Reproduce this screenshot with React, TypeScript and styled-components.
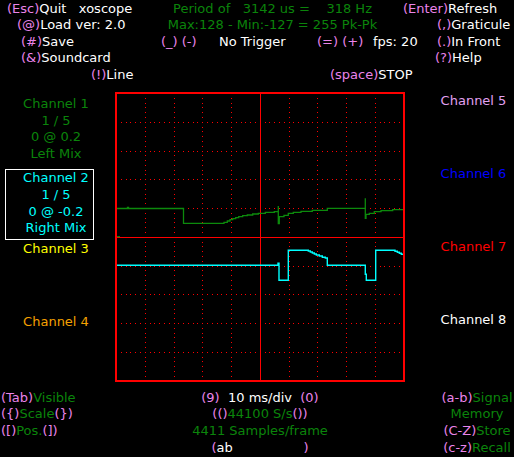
import React from "react";
import styled, { createGlobalStyle } from "styled-components";

const LH = 16.67;
const GREEN = "#0b840b";
const KEY = "#ea84ea";

const Global = createGlobalStyle`
  html, body { margin: 0; padding: 0; background: #000; }
  body { font-family: "DejaVu Sans", "Noto Sans", sans-serif; font-size: 13px; color: #fff; }
`;

const Screen = styled.div`
  width: 514px;
  height: 457px;
  box-sizing: border-box;
  padding-top: 0.5px;
  background: #000;
  display: flex;
  flex-direction: column;
  overflow: hidden;
`;

const Header = styled.div`
  display: flex;
  flex-direction: column;
`;

const Row = styled.div<{ $pl: number }>`
  display: flex;
  height: ${LH}px;
  line-height: ${LH}px;
  padding-left: ${(p) => p.$pl}px;
  white-space: pre;
`;

const Slot = styled.span<{ $w?: number; $center?: boolean }>`
  flex: ${(p) => (p.$w ? `0 0 ${p.$w}px` : "1 1 auto")};
  text-align: ${(p) => (p.$center ? "center" : "left")};
  overflow: visible;
`;

const Key = styled.span`
  color: ${KEY};
`;
const G = styled.span`
  color: ${GREEN};
`;

const Middle = styled.div`
  display: grid;
  grid-template-columns: 115px 290px 1fr;
  height: 306px;
  flex: 0 0 auto;
`;

const LeftCol = styled.div`
  display: flex;
  flex-direction: column;
  padding-right: 3px;
`;

const ChannelBlock = styled.div<{ $color: string; $mt: number; $selected?: boolean }>`
  margin-top: ${(p) => p.$mt}px;
  color: ${(p) => p.$color};
  text-align: center;
  line-height: ${LH}px;
  white-space: pre;
  ${(p) =>
    p.$selected
      ? `
    margin-left: 5px;
    width: 89px;
    box-sizing: border-box;
    border: 1px solid #fff;
    padding-left: 13px;
    padding-bottom: 1.6px;
  `
      : ""}
`;

const RightCol = styled.div`
  display: flex;
  flex-direction: column;
  padding-top: 9px;
  padding-left: 28px;
  gap: 56.33px;
`;

const ChannelName = styled.div<{ $color: string }>`
  color: ${(p) => p.$color};
  text-align: center;
  line-height: ${LH}px;
  white-space: pre;
`;

const ScopeWrap = styled.div`
  padding-top: 8.17px;
`;

const Bottom = styled.div`
  display: grid;
  grid-template-columns: 180px 160px 1fr;
`;

const BottomCol = styled.div<{ $align: "left" | "center"; $pl?: number }>`
  display: flex;
  flex-direction: column;
  text-align: ${(p) => p.$align};
  padding-left: ${(p) => p.$pl ?? 0}px;
  line-height: ${LH}px;
  white-space: pre;
`;

const Line = styled.div`
  height: ${LH}px;
`;

const Clipped = styled.div`
  height: ${LH}px;
  width: 97px;
  margin: 0 auto;
  display: flex;
  justify-content: space-between;
`;

/* ---------- scope drawing ---------- */
const OX = 115;
const OY = 92;

function stairs(x0: number, y0: number, cmds: (string | number)[]): string {
  let d = `M${(x0 - OX).toFixed(2)} ${(y0 - OY).toFixed(2)}`;
  for (let i = 0; i < cmds.length; i += 2) {
    const c = cmds[i] as string;
    const v = cmds[i + 1] as number;
    d += ` ${c}${(v - (c === "H" ? OX : OY)).toFixed(2)}`;
  }
  return d;
}

const greenPath = stairs(117, 208.5, [
  "H", 127.5, "V", 207.3, "H", 128.5, "V", 208.5,
  "H", 183.5, "V", 223.3, "H", 224, "V", 222.3, "H", 227.3, "V", 221, "H", 230, "V", 219.7,
  "H", 232.7, "V", 218.7, "H", 235.7, "V", 217.7, "H", 238.7, "V", 216.7, "H", 242.7, "V", 215.7,
  "H", 247.3, "V", 215, "H", 252.7, "V", 214, "H", 258.3, "V", 213.3, "H", 265.3, "V", 212.3,
  "H", 274.3, "V", 211.7, "H", 278.3, "V", 206, "V", 223.7, "H", 279.3, "V", 216.7,
  "H", 284, "V", 215.3, "H", 288.3, "V", 213.3, "H", 293.3, "V", 212.3, "H", 301, "V", 211.3,
  "H", 312.3, "V", 210.3, "H", 327.3, "V", 208.3, "H", 365.3, "V", 198.3, "V", 218.3,
  "H", 366, "V", 214.3, "H", 369.3, "V", 213.3, "H", 374.3, "V", 211.7, "H", 381, "V", 210.7,
  "H", 392.7, "V", 209.7, "H", 403,
]);

const cyanPath = stairs(117, 265.3, [
  "H", 278, "V", 263.3, "H", 279, "V", 280.3, "H", 288.3, "V", 250.3, "H", 308.3, "V", 251,
  "H", 310.3, "V", 252, "H", 312.3, "V", 253, "H", 314.3, "V", 254, "H", 316.3, "V", 255,
  "H", 319.3, "V", 256, "H", 322.3, "V", 257.3, "H", 325.3, "V", 258, "H", 327.3, "V", 265.3,
  "H", 365.3, "V", 274.3, "H", 366.3, "V", 280.3, "H", 375.7, "V", 250.3, "H", 395, "V", 251.3,
  "H", 397.3, "V", 252.3, "H", 399.3, "V", 253.3, "H", 401.3, "V", 254.3, "H", 403,
]);

function gridDots(): string {
  const div = 28.75;
  let d = "";
  for (let k = 1; k <= 9; k++) {
    if (k === 5) continue;
    const g = Math.floor(1.5 + div * k);
    for (let j = 1; j < 60; j++) {
      const t = Math.floor(1.5 + (j * div) / 6);
      d += `M${g} ${t}h1v1h-1z`;
      d += `M${t} ${g}h1v1h-1z`;
    }
  }
  return d;
}

const dots = gridDots();

const Scope: React.FC = () => (
  <svg width={290} height={290} viewBox="0 0 290 290" style={{ display: "block" }}>
    <path d={dots} fill="#ff0000" />
    <line x1={145.5} y1={2} x2={145.5} y2={288} stroke="#ff0000" strokeWidth={1} />
    <line x1={2} y1={145.5} x2={288} y2={145.5} stroke="#ff0000" strokeWidth={1} />
    <rect x={2} y={144} width={3} height={1.2} fill={GREEN} />
    <path d={greenPath} fill="none" stroke="#0c8a0c" strokeWidth={1.3} strokeLinejoin="miter" />
    <path d={cyanPath} fill="none" stroke="#00ffff" strokeWidth={1.4} strokeLinejoin="miter" />
    <rect x={1} y={1} width={288} height={288} fill="none" stroke="#ff0000" strokeWidth={2} />
  </svg>
);

export default function App() {
  return (
    <Screen>
      <Global />
      <Header>
        <Row $pl={7}>
          <Slot $w={143}>
            <Key>(Esc)</Key>Quit   xoscope
          </Slot>
          <Slot $w={245} $center>
            <G>Period of   3142 us =    318 Hz</G>
          </Slot>
          <Slot $w={8} />
          <Slot>
            <Key>(Enter)</Key>Refresh
          </Slot>
        </Row>
        <Row $pl={17}>
          <Slot $w={133}>
            <Key>(@)</Key>Load ver: 2.0
          </Slot>
          <Slot $w={245} $center>
            <G>Max:128 - Min:-127 = 255 Pk-Pk</G>
          </Slot>
          <Slot $w={42} />
          <Slot>
            <Key>(,)</Key>Graticule
          </Slot>
        </Row>
        <Row $pl={21}>
          <Slot $w={140}>
            <Key>(#)</Key>Save
          </Slot>
          <Slot $w={58}>
            <Key>(_) (-)</Key>
          </Slot>
          <Slot $w={98}>No Trigger</Slot>
          <Slot $w={56}>
            <Key>(=) (+)</Key>
          </Slot>
          <Slot $w={64}>fps: 20</Slot>
          <Slot>
            <Key>(.)</Key>In Front
          </Slot>
        </Row>
        <Row $pl={21}>
          <Slot $w={414}>
            <Key>(&amp;)</Key>Soundcard
          </Slot>
          <Slot>
            <Key>(?)</Key>Help
          </Slot>
        </Row>
        <Row $pl={91}>
          <Slot $w={239}>
            <Key>(!)</Key>Line
          </Slot>
          <Slot>
            <Key>(space)</Key>STOP
          </Slot>
        </Row>
      </Header>

      <Middle>
        <LeftCol>
          <ChannelBlock $color={GREEN} $mt={12.3}>
            <div>Channel 1</div>
            <div>1 / 5</div>
            <div>0 @ 0.2</div>
            <div>Left Mix</div>
          </ChannelBlock>
          <ChannelBlock $color="#00ffff" $mt={6.7} $selected>
            <div>Channel 2</div>
            <div>1 / 5</div>
            <div>0 @ -0.2</div>
            <div>Right Mix</div>
          </ChannelBlock>
          <ChannelBlock $color="#ffff00" $mt={1.3}>
            <div>Channel 3</div>
          </ChannelBlock>
          <ChannelBlock $color="#f5a000" $mt={56.7}>
            <div>Channel 4</div>
          </ChannelBlock>
        </LeftCol>
        <ScopeWrap>
          <Scope />
        </ScopeWrap>
        <RightCol>
          <ChannelName $color="#e2a0f2">Channel 5</ChannelName>
          <ChannelName $color="#0000ff">Channel 6</ChannelName>
          <ChannelName $color="#ff0000">Channel 7</ChannelName>
          <ChannelName $color="#ffffff">Channel 8</ChannelName>
        </RightCol>
      </Middle>

      <Bottom>
        <BottomCol $align="left" $pl={1}>
          <Line>
            <Key>(Tab)</Key>
            <G>Visible</G>
          </Line>
          <Line>
            <Key>({"{"})</Key>
            <G>Scale</G>
            <Key>({"}"})</Key>
          </Line>
          <Line>
            <Key>([)</Key>
            <G>Pos.</G>
            <Key>(])</Key>
          </Line>
        </BottomCol>
        <BottomCol $align="center">
          <Line>
            <Key>(9)</Key>  10 ms/div  <Key>(0)</Key>
          </Line>
          <Line>
            <Key>(()</Key>
            <G>44100 S/s</G>
            <Key>())</Key>
          </Line>
          <Line>
            <G>4411 Samples/frame</G>
          </Line>
          <Clipped>
            <span>
              <Key>(</Key>ab
            </span>
            <Key>)</Key>
          </Clipped>
        </BottomCol>
        <BottomCol $align="center" $pl={100}>
          <Line>
            <Key>(a-b)</Key>
            <G>Signal</G>
          </Line>
          <Line>
            <G>Memory</G>
          </Line>
          <Line>
            <Key>(C-Z)</Key>
            <G>Store</G>
          </Line>
          <Line>
            <Key>(c-z)</Key>
            <G>Recall</G>
          </Line>
        </BottomCol>
      </Bottom>
    </Screen>
  );
}
